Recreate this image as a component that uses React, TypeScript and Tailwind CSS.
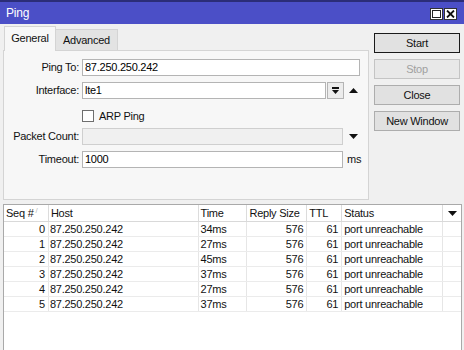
import React from 'react';

const rows = [
  { seq: 0, time: '34ms' },
  { seq: 1, time: '27ms' },
  { seq: 2, time: '45ms' },
  { seq: 3, time: '37ms' },
  { seq: 4, time: '27ms' },
  { seq: 5, time: '37ms' },
];

const TitleBar = () => (
  <div className="h-[24px] border-t-2 border-[#2b2d78] bg-[#4b4fc7] flex items-center pl-[6px] pr-[7px]">
    <span className="text-white text-[12px] tracking-[-0.2px]">Ping</span>
    <div className="ml-auto flex gap-[1px] mt-[2px]">
      <div className="w-[13px] h-[12px] bg-white border border-[#333] flex items-center justify-center">
        <div className="w-[9px] h-[8px] border border-[#222]" />
      </div>
      <div className="w-[13px] h-[12px] bg-white border border-[#333] flex items-center justify-center">
        <svg width="9" height="8" viewBox="0 0 9 8">
          <path d="M1 0.5 L8 7.5 M8 0.5 L1 7.5" stroke="#111" strokeWidth="1.8" />
        </svg>
      </div>
    </div>
  </div>
);

const Field = ({ label, className = '', children }: { label: string; className?: string; children: React.ReactNode }) => (
  <div className={`flex items-center h-[17px] ${className}`}>
    <span className="w-[75px] text-right text-[#111]">{label}</span>
    <div className="ml-[3px] flex items-center h-full">{children}</div>
  </div>
);

const Input = ({ value, w, disabled }: { value?: string; w: string; disabled?: boolean }) => (
  <div
    className={`h-[17px] ${w} border flex items-center pl-[2px] ${
      disabled ? 'bg-[#f0f0f0] border-[#cfcfcf]' : 'bg-white border-[#b4b4b4]'
    }`}
  >
    {value}
  </div>
);

const UpArrow = () => (
  <svg width="9" height="5" viewBox="0 0 9 5" className="ml-[5px]">
    <path d="M0 5 L4.5 0 L9 5 Z" fill="#111" />
  </svg>
);

const DownArrow = ({ className = '' }: { className?: string }) => (
  <svg width="9" height="5" viewBox="0 0 9 5" className={className}>
    <path d="M0 0 L9 0 L4.5 5 Z" fill="#111" />
  </svg>
);

const Panel = () => (
  <div className="flex flex-col w-[366px]">
    <div className="flex items-end h-[24px] pl-[1px]">
      <div className="h-[25px] w-[52px] bg-[#f7f7f7] border border-b-0 border-[#d4d4d4] flex items-center justify-center text-[#111] relative z-10 -mb-[1px] pb-[1px]">
        General
      </div>
      <div className="h-[21px] w-[62px] bg-[#e3e3e3] border border-b-0 border-l-0 border-[#d4d4d4] flex items-center justify-center text-[#111]">
        Advanced
      </div>
    </div>
    <div className="h-[150px] border border-[#d4d4d4] bg-[#f7f7f7] pt-[8px]">
      <Field label="Ping To:">
        <Input value="87.250.250.242" w="w-[278px]" />
      </Field>
      <Field label="Interface:" className="mt-[6px]">
        <Input value="lte1" w="w-[244px]" />
        <div className="ml-[1px] w-[17px] h-[17px] border border-[#b4b4b4] bg-[#ececec] flex flex-col items-center justify-center">
          <div className="w-[7px] h-[1.5px] bg-[#111]" />
          <svg width="7" height="4" viewBox="0 0 7 4" className="mt-[1px]">
            <path d="M0 0 L7 0 L3.5 4 Z" fill="#111" />
          </svg>
        </div>
        <UpArrow />
      </Field>
      <div className="flex items-center h-[12px] mt-[11px] pl-[78px]">
        <div className="w-[12px] h-[12px] bg-white border border-[#6e6e6e]" />
        <span className="ml-[5px] text-[#111]">ARP Ping</span>
      </div>
      <Field label="Packet Count:" className="mt-[6px]">
        <Input w="w-[261px]" disabled />
        <DownArrow className="ml-[6px]" />
      </Field>
      <Field label="Timeout:" className="mt-[6px]">
        <Input value="1000" w="w-[261px]" />
        <span className="ml-[4px] text-[#111]">ms</span>
      </Field>
    </div>
  </div>
);

const Buttons = () => (
  <div className="ml-[5px] pt-[7px] flex flex-col gap-[6px] w-[86px]">
    <div className="h-[20px] border border-[#1a1a1a] bg-[#e1e1e1] flex items-center justify-center text-[#111]">Start</div>
    <div className="h-[20px] border border-[#c4c4c4] bg-[#e8e8e8] flex items-center justify-center text-[#a0a0a0]">Stop</div>
    <div className="h-[20px] border border-[#adadad] bg-[#e1e1e1] flex items-center justify-center text-[#111]">Close</div>
    <div className="h-[20px] border border-[#adadad] bg-[#e1e1e1] flex items-center justify-center text-[#111]">New Window</div>
  </div>
);

const cols = ['w-[45px]', 'w-[150px]', 'w-[49px]', 'w-[60px]', 'w-[35px]', 'w-[101px]', 'w-[18px]'];

const Table = () => (
  <div className="mt-[4px] ml-[3px] w-[459px] h-[146px] bg-white border-l border-t border-r border-[#a9a9a9]">
    <div className="flex h-[17px] border-b border-[#d9d9d9] text-[#111]">
      <div className={`${cols[0]} border-r border-[#dcdcdc] pl-[2px] flex items-center`}>
        Seq #<span className="ml-[2px] text-[#bbb] text-[8px] -mt-[4px]">/</span>
      </div>
      <div className={`${cols[1]} border-r border-[#dcdcdc] pl-[2px] flex items-center`}>Host</div>
      <div className={`${cols[2]} border-r border-[#dcdcdc] pl-[2px] flex items-center`}>Time</div>
      <div className={`${cols[3]} border-r border-[#dcdcdc] pl-[2px] flex items-center`}>Reply Size</div>
      <div className={`${cols[4]} border-r border-[#dcdcdc] pl-[2px] flex items-center`}>TTL</div>
      <div className={`${cols[5]} border-r border-[#dcdcdc] pl-[2px] flex items-center`}>Status</div>
      <div className={`${cols[6]} flex items-center justify-center`}>
        <DownArrow />
      </div>
    </div>
    {rows.map((r) => (
      <div key={r.seq} className="flex h-[15px] border-b border-[#ebebeb] text-[#111]">
        <div className={`${cols[0]} border-r border-[#e6e6e6] pr-[3px] flex items-center justify-end`}>{r.seq}</div>
        <div className={`${cols[1]} border-r border-[#e6e6e6] pl-[1px] flex items-center`}>87.250.250.242</div>
        <div className={`${cols[2]} border-r border-[#e6e6e6] pl-[2px] flex items-center`}>{r.time}</div>
        <div className={`${cols[3]} border-r border-[#e6e6e6] pr-[3px] flex items-center justify-end`}>576</div>
        <div className={`${cols[4]} border-r border-[#e6e6e6] pr-[3px] flex items-center justify-end`}>61</div>
        <div className={`${cols[5]} border-r border-[#e6e6e6] pl-[2px] flex items-center`}>port unreachable</div>
        <div className={cols[6]} />
      </div>
    ))}
  </div>
);

export default function App() {
  return (
    <div
      className="w-[464px] h-[350px] bg-[#f0f0f0] overflow-hidden text-[11px] tracking-[-0.25px] leading-none"
      style={{ fontFamily: '"Liberation Sans", Arial, sans-serif' }}
    >
      <TitleBar />
      <div className="flex pl-[3px] pt-[2px] h-[176px]">
        <Panel />
        <Buttons />
      </div>
      <Table />
    </div>
  );
}
